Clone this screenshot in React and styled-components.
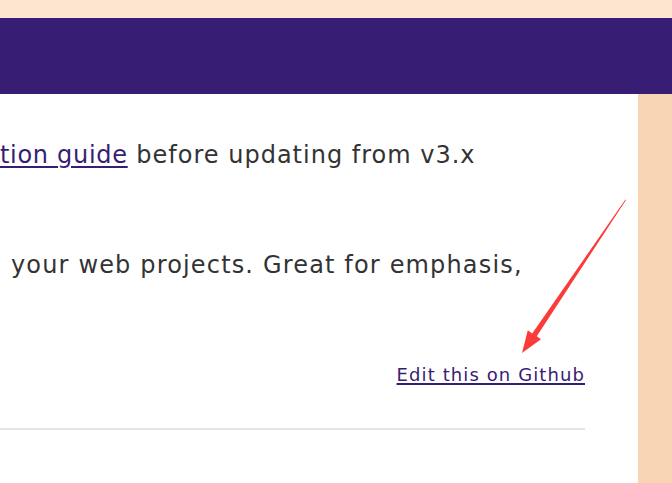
import React from 'react';
import styled, { createGlobalStyle } from 'styled-components';

const GlobalStyle = createGlobalStyle`
  html, body {
    margin: 0;
    padding: 0;
    background: #fff;
  }
  body {
    font-family: "DejaVu Sans", "Open Sans", sans-serif;
    color: #333;
  }
`;

const Page = styled.div`
  position: relative;
  width: 672px;
  height: 483px;
  overflow: hidden;
  display: flex;
  flex-direction: column;
`;

const TopStrip = styled.div`
  height: 18px;
  background: #fde6cf;
`;

const Header = styled.header`
  height: 76px;
  background: #371d74;
`;

const Body = styled.div`
  flex: 1;
  display: flex;
`;

const Content = styled.main`
  flex: 1;
  background: #fff;
  padding: 43px 53px 0 0;
  display: flex;
  flex-direction: column;
`;

const Aside = styled.aside`
  width: 34px;
  background: #f8d6b4;
`;

const Para = styled.p`
  margin: 0 0 ${p => p.$gap || 0}px;
  padding-left: ${p => p.$indent || 0}px;
  font-size: 24px;
  line-height: 36px;
  color: #333;
  white-space: nowrap;
  letter-spacing: ${p => p.$spacing || 1}px;
`;

const Link = styled.a`
  color: #371d74;
  text-decoration: underline;
  text-underline-offset: 3px;
  text-decoration-thickness: 2px;
  letter-spacing: 0.7px;
`;

const EditRow = styled.div`
  display: flex;
  justify-content: flex-end;
  margin-top: 80px;
  padding-bottom: 41px;
  border-bottom: 2px solid #e6e6e6;
`;

const EditLink = styled.a`
  font-size: 18px;
  line-height: 24px;
  color: #371d74;
  text-decoration: underline;
  text-underline-offset: 2px;
  text-decoration-thickness: 2px;
  letter-spacing: 1.1px;
`;

const Arrow = styled.svg`
  position: absolute;
  left: 0;
  top: 0;
  pointer-events: none;
`;

export default function App() {
  return (
    <>
      <GlobalStyle />
      <Page>
        <TopStrip />
        <Header />
        <Body>
          <Content>
            <Para $gap={74}>
              <Link href="#">tion guide</Link> before updating from v3.x
            </Para>
            <Para $indent={11} $spacing={1.16}>
              your web projects. Great for emphasis,
            </Para>
            <EditRow>
              <EditLink href="#">Edit this on Github</EditLink>
            </EditRow>
          </Content>
          <Aside />
        </Body>
        <Arrow width="672" height="483" viewBox="0 0 672 483">
          <polygon
            points="626,200 536.8,336.2 541,339.3 522,353 527.8,330.3 532.2,333.4 625.4,199.6"
            fill="#fb3a3a"
          />
        </Arrow>
      </Page>
    </>
  );
}
